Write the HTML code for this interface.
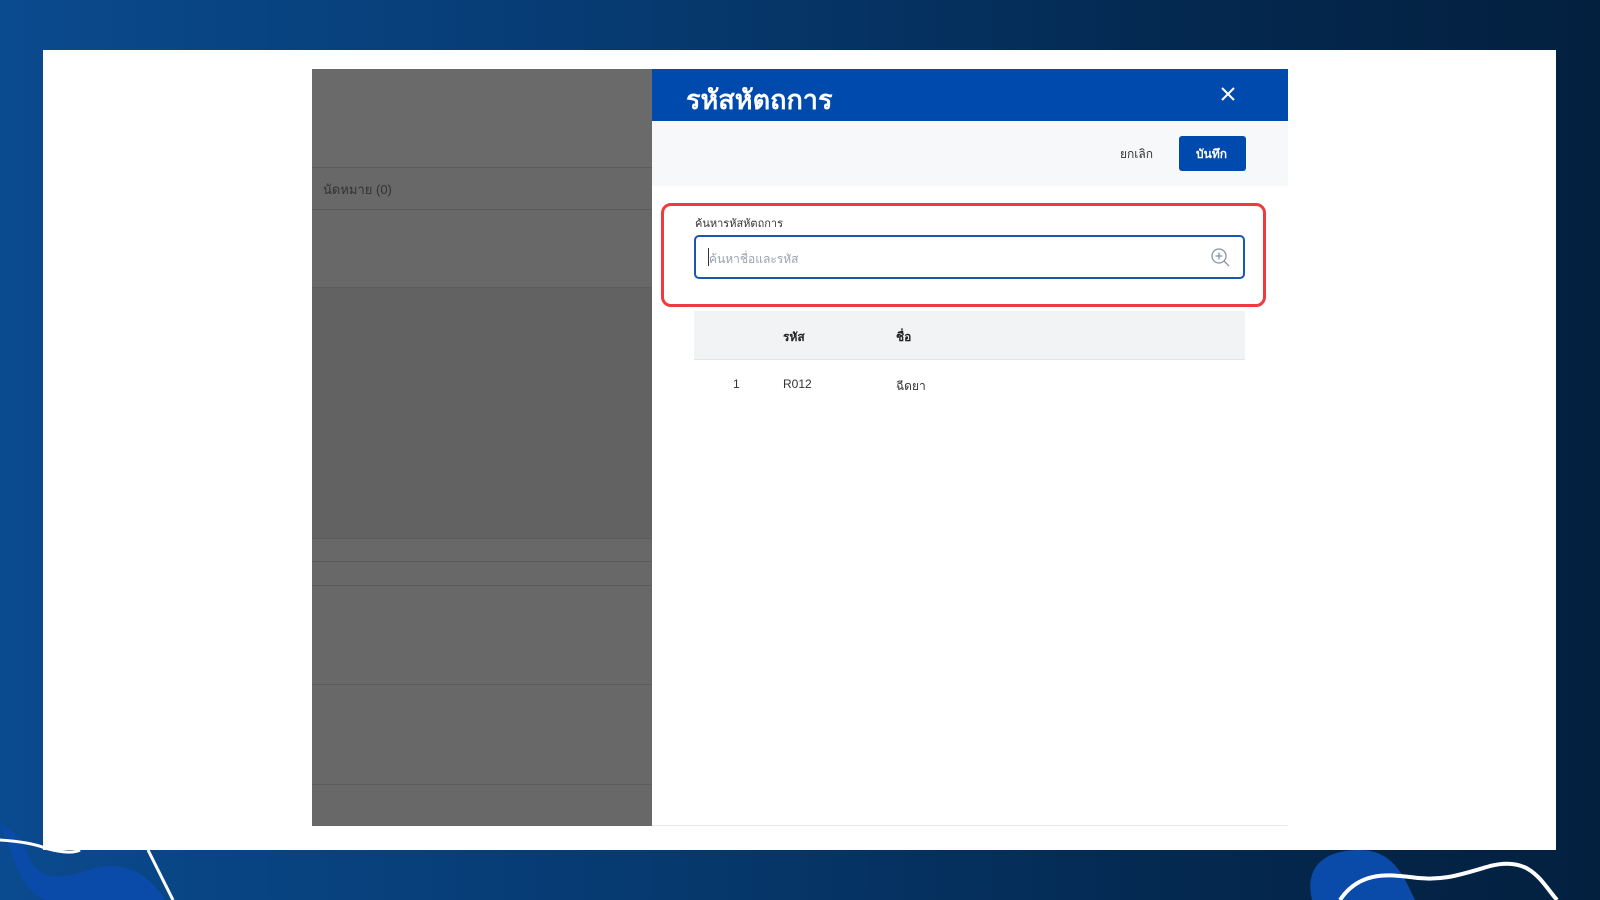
<!DOCTYPE html>
<html><head><meta charset="utf-8"><style>
*{margin:0;padding:0;box-sizing:border-box}
body{width:1600px;height:900px;overflow:hidden;position:relative;font-family:"Liberation Sans","Noto Sans CJK SC",sans-serif;background:linear-gradient(90deg,#0a4a8e 0%,#063a70 40%,#04284f 75%,#03203f 100%)}
.abs{position:absolute}
.white{left:43px;top:50px;width:1513px;height:800px;background:#fff}
.gray{left:312px;top:69px;width:340px;height:757px;background:#686868}
.gl{left:0;width:340px;height:1px;background:#5c5c5c}
.hdr{left:652px;top:69px;width:636px;height:52px;background:#004aad;color:#fff}
.tb{left:652px;top:121px;width:636px;height:65px;background:#f7f8fa}
.t{position:absolute;white-space:nowrap;font-size:12px;color:#222}
</style></head><body>
<div class="abs white"></div>
<div class="abs gray">
 <div class="abs" style="left:0;top:0;width:340px;height:98px;background:#6a6a6a"></div>
 <div class="abs" style="left:0;top:218px;width:340px;height:251px;background:#626262"></div>
 <div class="abs gl" style="top:98px"></div>
 <div class="abs gl" style="top:140px"></div>
 <div class="abs gl" style="top:218px"></div>
 <div class="abs gl" style="top:469px"></div>
 <div class="abs gl" style="top:492px"></div>
 <div class="abs gl" style="top:516px"></div>
 <div class="abs gl" style="top:615px"></div>
 <div class="abs gl" style="top:715px"></div>
 <div class="t" style="left:11px;top:110px;color:#333;font-size:13px">นัดหมาย (0)</div>
</div>
<div class="abs" style="left:652px;top:69px;width:636px;height:757px;background:#fff;border-bottom:1px solid #e6e9ef"></div>
<div class="abs hdr"><div class="t" style="left:34px;top:9px;color:#fff;font-size:27px;font-weight:bold">รหัสหัตถการ</div>
<svg class="abs" style="left:568px;top:17px" width="16" height="16"><path d="M2 2L14 14M14 2L2 14" stroke="#fff" stroke-width="2"/></svg></div>
<div class="abs tb">
 <div class="t" style="left:468px;top:24px;font-size:12px;color:#333">ยกเลิก</div>
 <div class="abs" style="left:527px;top:15px;width:67px;height:35px;background:#004aad;border-radius:3px"></div>
 <div class="t" style="left:544px;top:24px;color:#fff;font-weight:bold">บันทึก</div>
</div>
<div class="abs" style="left:661px;top:203px;width:605px;height:104px;border:3px solid #ef3a3e;border-radius:10px"></div>
<div class="t" style="left:695px;top:214px;font-size:11px;color:#333">ค้นหารหัสหัตถการ</div>
<div class="abs" style="left:694px;top:235px;width:551px;height:44px;border:2px solid #1a55b0;border-radius:5px"></div>
<div class="abs" style="left:708px;top:248px;width:1px;height:18px;background:#333"></div>
<div class="t" style="left:709px;top:250px;color:#9aa3b0">ค้นหาชื่อและรหัส</div>
<svg class="abs" style="left:1210px;top:247px" width="22" height="22"><circle cx="9" cy="9" r="7" fill="none" stroke="#8a93a3" stroke-width="1.3"/><path d="M9 5.5v7M5.5 9h7M14 14l5 5" stroke="#8a93a3" stroke-width="1.3"/></svg>
<div class="abs" style="left:694px;top:311px;width:551px;height:49px;background:#f2f3f5;border-bottom:1px solid #e3e5e9"></div>
<div class="t" style="left:783px;top:328px;font-weight:bold">รหัส</div>
<div class="t" style="left:896px;top:328px;font-weight:bold">ชื่อ</div>
<div class="t" style="left:733px;top:377px;color:#333">1</div>
<div class="t" style="left:783px;top:377px;color:#333">R012</div>
<div class="t" style="left:896px;top:377px;color:#333">ฉีดยา</div>
<svg class="abs" style="left:0;top:780px" width="1600" height="120">
 <path d="M0 45 C15 80 20 110 45 120 L165 120 C150 95 125 80 95 88 C60 100 40 100 30 80 C25 65 15 50 0 45 Z" fill="#0a4aa8"/>
 <path d="M0 60 Q30 62 45 68 Q70 75 80 70" stroke="#fff" stroke-width="3" fill="none"/>
 <path d="M148 70 L173 120" stroke="#fff" stroke-width="3" fill="none"/>
 <path d="M1312 120 C1305 90 1320 70 1360 70 C1395 70 1405 100 1415 120 Z" fill="#0a4aa8"/>
 <path d="M1340 120 C1360 90 1390 95 1410 97 C1440 102 1460 95 1490 86 C1530 76 1540 100 1557 120" stroke="#fff" stroke-width="4" fill="none"/>
</svg>
</body></html>
